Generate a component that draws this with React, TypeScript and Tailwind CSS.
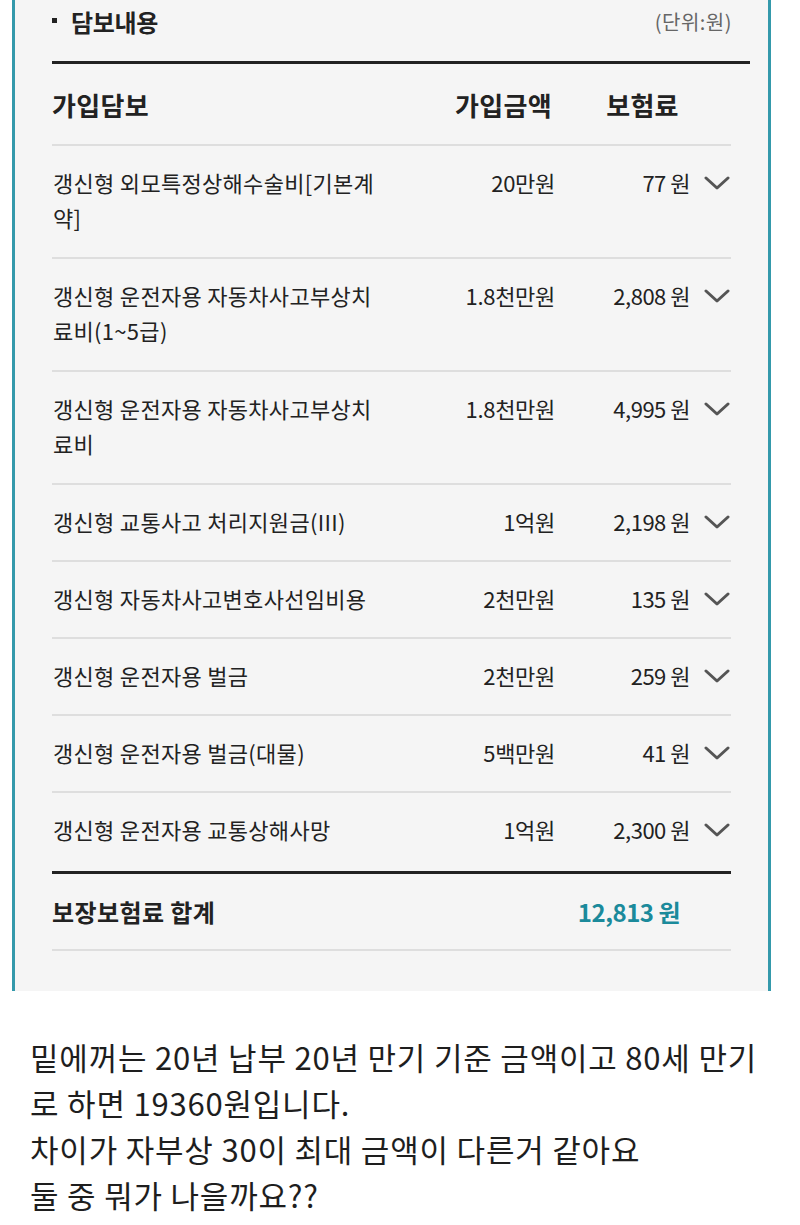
type Coverage = {
  name: string[]
  amount: string
  premium: string
}

const coverages: Coverage[] = [
  { name: ['갱신형 외모특정상해수술비[기본계', '약]'], amount: '20만원', premium: '77' },
  { name: ['갱신형 운전자용 자동차사고부상치', '료비(1~5급)'], amount: '1.8천만원', premium: '2,808' },
  { name: ['갱신형 운전자용 자동차사고부상치', '료비'], amount: '1.8천만원', premium: '4,995' },
  { name: ['갱신형 교통사고 처리지원금(III)'], amount: '1억원', premium: '2,198' },
  { name: ['갱신형 자동차사고변호사선임비용'], amount: '2천만원', premium: '135' },
  { name: ['갱신형 운전자용 벌금'], amount: '2천만원', premium: '259' },
  { name: ['갱신형 운전자용 벌금(대물)'], amount: '5백만원', premium: '41' },
  { name: ['갱신형 운전자용 교통상해사망'], amount: '1억원', premium: '2,300' }
]

const Chevron = () => (
  <svg width="26" height="14" viewBox="0 0 26 14" fill="none" className="mt-[11px]">
    <path d="M2 2 L13 12 L24 2" stroke="#555" strokeWidth="3" strokeLinecap="round" strokeLinejoin="round" />
  </svg>
)

const CoverageRow = ({ item, last }: { item: Coverage; last: boolean }) => {
  const twoLines = item.name.length > 1
  return (
    <div
      className={
        last
          ? 'flex items-start pt-[19px] pb-[24px]'
          : twoLines
            ? 'flex items-start pt-[19px] pb-[22px] border-b-2 border-[#dedede]'
            : 'flex items-start pt-[19px] pb-[21px] border-b-2 border-[#dedede]'
      }
    >
      <div className="w-[340px] pl-[1px] whitespace-nowrap">
        {item.name.map((line) => (
          <div key={line}>{line}</div>
        ))}
      </div>
      <div className="w-[163px] text-right whitespace-nowrap tracking-[-0.3px]">{item.amount}</div>
      <div className="w-[135px] text-right whitespace-nowrap tracking-[-0.5px]">{item.premium} 원</div>
      <div className="ml-[14px] w-[26px]">
        <Chevron />
      </div>
    </div>
  )
}

const App = () => {
  return (
    <div className="w-[800px] min-h-[1225px] bg-white font-['Noto_Sans_CJK_KR','Noto_Sans',sans-serif] text-[#222]">
      <div className="ml-[12px] w-[759px] border-x-[3px] border-[#3499ab] bg-[#f5f5f5] pl-[37px] pr-[18px] pb-[40px]">
        <div className="flex h-[44px] items-center justify-between">
          <div className="flex items-center">
            <span className="mb-[3px] h-[5px] w-[5px] bg-[#222]" />
            <span className="ml-[14px] text-[24px] font-bold tracking-[-0.3px]">담보내용</span>
          </div>
          <span className="pr-[18px] text-[20px] text-[#666] tracking-[0.5px]">(단위:원)</span>
        </div>
        <div className="mt-[17px] h-[3px] w-full bg-[#222]" />

        <div className="mr-[19px]">
          <div className="flex h-[82px] items-center border-b-2 border-[#dedede] text-[26px] font-bold tracking-[0.3px]">
            <div className="w-[340px]">가입담보</div>
            <div className="w-[163px] pr-[3px] text-right">가입금액</div>
            <div className="w-[175px] text-center">보험료</div>
          </div>

          <div className="text-[22px] leading-[35px] tracking-[0.3px]">
            {coverages.map((item, i) => (
              <CoverageRow key={i} item={item} last={i === coverages.length - 1} />
            ))}
          </div>

          <div className="h-[3px] w-full bg-[#222]" />

          <div className="flex h-[77px] items-center border-b-2 border-[#dedede] font-bold">
            <div className="w-[340px] text-[24px] tracking-[0.4px]">보장보험료 합계</div>
            <div className="w-[163px]" />
            <div className="w-[135px] pr-[10px] text-right text-[24px] text-[#1b8a9b] tracking-[-0.5px]">12,813 원</div>
          </div>
        </div>
      </div>

      <div className="pl-[30px] pt-[43px] text-[31px] leading-[46px] tracking-[0.8px] text-[#1e1e1e] whitespace-nowrap">
        <p>
          밑에꺼는 20년 납부 20년 만기 기준 금액이고 80세 만기
          <br />
          로 하면 19360원입니다.
        </p>
        <p>차이가 자부상 30이 최대 금액이 다른거 같아요</p>
        <p>둘 중 뭐가 나을까요??</p>
      </div>
    </div>
  )
}

export default App
